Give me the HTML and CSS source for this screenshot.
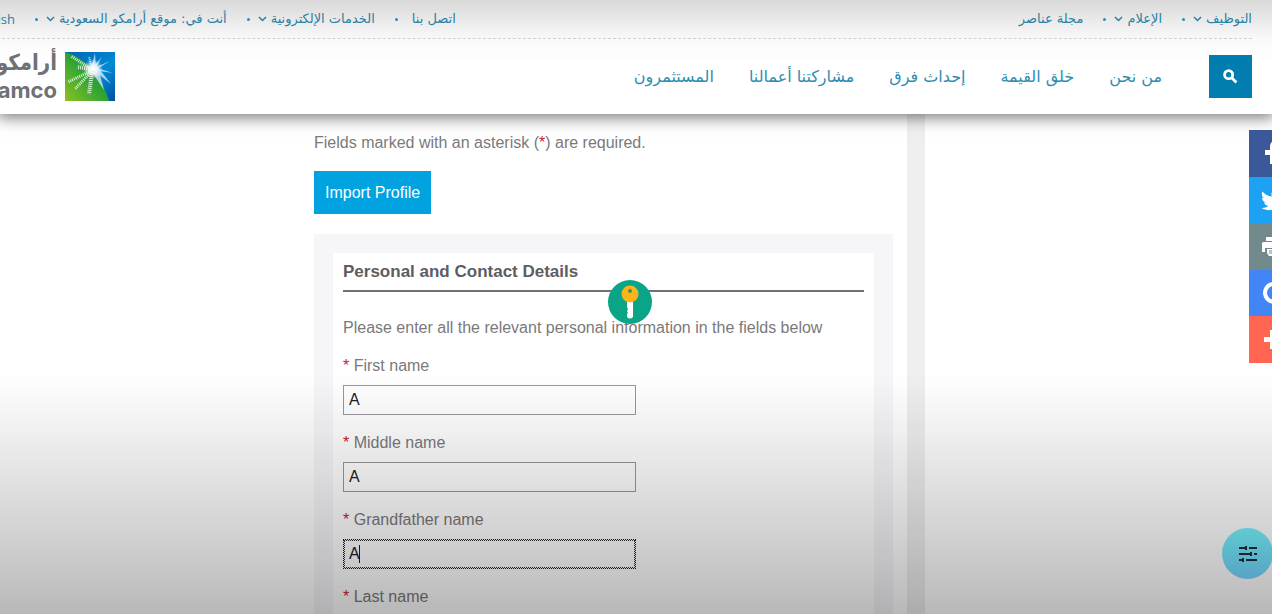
FILE: index.html
```
<!DOCTYPE html>
<html lang="en">
<head>
    <meta charset="UTF-8">
    <meta name="viewport" content="width=device-width, initial-scale=1.0">
    <title>Aramco Careers</title>
    <link rel="stylesheet" href="styles.css">
</head>
<body>
    <header class="site-header" dir="rtl" lang="ar">
        <div class="header-inner">
            <div class="top-bar">
                <ul class="top-links">
                    <li><a href="#">التوظيف</a><svg class="chevron" viewBox="0 0 9 6"><path d="M1 1l3.500 3.500L8 1"/></svg></li>
                    <li><a href="#">الإعلام</a><svg class="chevron" viewBox="0 0 9 6"><path d="M1 1l3.500 3.500L8 1"/></svg></li>
                    <li><a href="#">مجلة عناصر</a></li>
                </ul>
                <ul class="top-links">
                    <li><a href="#">اتصل بنا</a></li>
                    <li><a href="#">الخدمات الإلكترونية</a><svg class="chevron" viewBox="0 0 9 6"><path d="M1 1l3.500 3.500L8 1"/></svg></li>
                    <li><a href="#">أنت في: موقع أرامكو السعودية</a><svg class="chevron" viewBox="0 0 9 6"><path d="M1 1l3.500 3.500L8 1"/></svg></li>
                    <li><a href="#" class="english" lang="en">English</a></li>
                </ul>
            </div>
            <div class="main-bar">
                <button class="search" type="button" aria-label="بحث">
                    <svg viewBox="0 0 16 16"><circle cx="6" cy="6" r="4.300"/><path d="M9.300 9.300l5 5"/></svg>
                </button>
                <nav class="main-nav">
                    <a href="#">من نحن</a>
                    <a href="#">خلق القيمة</a>
                    <a href="#">إحداث فرق</a>
                    <a href="#">مشاركتنا أعمالنا</a>
                    <a href="#">المستثمرون</a>
                </nav>
                <a href="#" class="logo">
                    <svg class="logo-mark" viewBox="0 0 50 49">
                        <defs>
                            <linearGradient id="green" x1="0" y1="1" x2="1" y2="0">
                                <stop offset="0" stop-color="#8cc220"/>
                                <stop offset="0.5" stop-color="#2ea434"/>
                                <stop offset="1" stop-color="#008a4b"/>
                            </linearGradient>
                            <linearGradient id="blue" x1="0" y1="0" x2="1" y2="1">
                                <stop offset="0" stop-color="#0068b3"/>
                                <stop offset="0.6" stop-color="#0089d6"/>
                                <stop offset="1" stop-color="#004f9e"/>
                            </linearGradient>
                            <radialGradient id="glow">
                                <stop offset="0" stop-color="#fff"/>
                                <stop offset="0.4" stop-color="#fff" stop-opacity="0.8"/>
                                <stop offset="1" stop-color="#fff" stop-opacity="0"/>
                            </radialGradient>
                        </defs>
                        <rect width="50" height="49" fill="url(#blue)"/>
                        <path d="M0 0C20 6 36 22 44 49H0z" fill="url(#green)"/>
                        <!-- solid rays on the blue side -->
                        <g fill="#cfe6f6" opacity="0.8">
                            <path d="M27 17L45 9 29 19z"/>
                            <path d="M27 18l21 3-19-6z"/>
                            <path d="M28 18l18 14-14-18z"/>
                            <path d="M27 20l12 18-5-19z"/>
                            <path d="M26 17l11-12-8 14z"/>
                            <path d="M26 17l4-16 1 16z"/>
                        </g>
                        <!-- broken rays on the green side -->
                        <g fill="none" stroke="#fff" stroke-dasharray="1 1" opacity="0.85">
                            <path d="M26 19L3 30" stroke-width="3"/>
                            <path d="M26 20L10 37" stroke-width="3"/>
                            <path d="M27 20l-3 22" stroke-width="4"/>
                            <path d="M26 17L6 4" stroke-width="3"/>
                            <path d="M26 17L12 15" stroke-width="4"/>
                            <path d="M27 16l-3-11" stroke-width="2"/>
                        </g>
                        <circle cx="28" cy="17" r="10" fill="url(#glow)"/>
                    </svg>
                    <span class="logo-text">
                        <span class="logo-ar">أرامكو</span>
                        <span class="logo-en" lang="en">aramco</span>
                    </span>
                </a>
            </div>
        </div>
    </header>

    <main class="page">
        <div class="content">
            <p class="note">Fields marked with an asterisk (<span class="star">*</span>) are required.</p>
            <button class="import" type="button">Import Profile</button>
            <form class="panel">
                <h2>Personal and Contact Details</h2>
                <p class="intro">Please enter all the relevant personal information in the fields below</p>
                <div class="field">
                    <label for="first"><span class="star">*</span> First name</label>
                    <input type="text" id="first" value="A">
                </div>
                <div class="field">
                    <label for="middle"><span class="star">*</span> Middle name</label>
                    <input type="text" id="middle" value="A">
                </div>
                <div class="field current">
                    <label for="grandfather"><span class="star">*</span> Grandfather name</label>
                    <input type="text" id="grandfather" value="A">
                    <span class="caret"></span>
                </div>
                <div class="field">
                    <label for="last"><span class="star">*</span> Last name</label>
                    <input type="text" id="last">
                </div>
                <!-- password manager key -->
                <svg class="key" viewBox="0 0 44 44">
                    <circle cx="22" cy="22" r="22" fill="#0aa587"/>
                    <path d="M19 20h6v17q-3 3-6 0v-3l1-1-1-2 1-2-1-2z" fill="#fff"/>
                    <circle cx="22" cy="14" r="8.500" fill="#fbb41c"/>
                    <circle cx="22" cy="11" r="2" fill="#4f8a50"/>
                </svg>
            </form>
        </div>
    </main>

    <div class="shade"></div>

    <aside class="share">
        <a href="#" class="facebook" aria-label="Facebook"><svg viewBox="0 0 32 32"><path d="M13 27V18H8v-5h5v-3c0-4 2-6 6-6h4v4h-3c-2 0-3 .6-3 2v3h6l-1 5h-5v9z"/></svg></a>
        <a href="#" class="twitter" aria-label="Twitter"><svg viewBox="0 0 32 32"><path d="M28 9l-3 1 2-3-3 1a5 5 0 0 0-9 4.500C11 12.300 8 10.500 5.500 7.500c-1.300 2.300-.7 5 1.500 6.500l-2-.6c0 2.400 1.500 4.300 4 5l-2 .1c.6 2 2.400 3.300 4.500 3.400A10 10 0 0 1 4.500 24C14 29.500 25.500 24 25.500 12z"/></svg></a>
        <a href="#" class="print" aria-label="Print"><svg viewBox="0 0 32 32"><path d="M9 7h14v4H9zM6 12h20l2 2v8h-4v-4H8v4H5v-9zM10 19h12v7H12l-2-3z"/><path d="M12 21h8M12 23h8" stroke="#738a8d"/></svg></a>
        <a href="#" class="google" aria-label="Google"><svg viewBox="0 0 32 32"><path d="M23 9a9 9 0 1 0 3 8H16" fill="none" stroke="#fff" stroke-width="4"/></svg></a>
        <a href="#" class="more" aria-label="More"><svg viewBox="0 0 32 32"><path d="M13 6h5v7h7v5h-7v7h-5v-7H7v-5h6z"/></svg></a>
    </aside>

    <button class="settings" type="button" aria-label="Settings">
        <svg viewBox="0 0 18 16"><path d="M0 2h7M10 2h8M7 0v4M0 8h11M15 8h3M12 6v4M0 14h4M7 14h11M4 12v4"/></svg>
    </button>
</body>
</html>
```
FILE: styles.css
```
* {
    box-sizing: border-box;
}
body {
    margin: 0;
    height: 100vh;
    font-family: "Liberation Sans", Arial, sans-serif;
    font-size: 16px;
    line-height: 20px;
    color: #7b797b;
    background: #fff;
    overflow: hidden;
}
a {
    color: #2f8db3;
    text-decoration: none;
}
button {
    border: 0;
    padding: 0;
    font: inherit;
    cursor: pointer;
}

/* header */
.site-header {
    position: relative;
    z-index: 1;
    height: 114px;
    font-family: "DejaVu Sans", sans-serif;
    background: #fff;
    box-shadow: 0 2px 14px 2px rgba(0, 0, 0, 0.5);
}
.header-inner {
    margin-right: 20px;
    margin-left: -28px;
}
.top-bar {
    display: flex;
    justify-content: space-between;
    height: 39px;
    border-bottom: 1px dashed #d5d5d5;
}
.top-links {
    display: flex;
    align-items: center;
    margin: 0;
    padding: 0;
    list-style: none;
    font-size: 13px;
    white-space: nowrap;
}
.top-links li {
    display: flex;
    align-items: center;
}
.top-links li:not(:last-child)::after {
    content: "";
    width: 3px;
    height: 3px;
    margin: 0 8px 0 20px;
    border-radius: 50%;
    background: #2f9dc8;
}
.top-links li:first-child:not(:has(svg))::after {
    margin-right: 14px;
}
.english {
    font-family: "Open Sans", sans-serif;
}
.chevron {
    width: 9px;
    height: 6px;
    margin-right: 4px;
    fill: none;
    stroke: #2f8db3;
    stroke-width: 1.5;
}
.main-bar {
    display: flex;
    align-items: center;
    height: 74px;
}
.search {
    display: flex;
    align-items: center;
    justify-content: center;
    width: 43px;
    height: 43px;
    background: #027db0;
}
.search svg {
    width: 15px;
    height: 15px;
    fill: none;
    stroke: #fff;
    stroke-width: 3;
}
.main-nav {
    display: flex;
    gap: 35px;
    margin-right: 47px;
    padding-top: 2px;
    font-size: 16px;
    white-space: nowrap;
}
.logo {
    display: flex;
    align-items: center;
    gap: 8px;
    width: 143px;
    margin-right: auto;
    color: #6f7175;
}
.logo-mark {
    flex: none;
    width: 50px;
    height: 49px;
}
.logo-text {
    display: flex;
    flex-direction: column;
    font-weight: bold;
}
.logo-ar {
    font-family: "DejaVu Sans Condensed", "DejaVu Sans", sans-serif;
    font-size: 22px;
    line-height: 28px;
}
.logo-en {
    font-family: Inter, sans-serif;
    font-size: 22px;
    line-height: 26px;
}

/* application form */
.page {
    display: grid;
    grid-template-columns: 314px minmax(0, 1fr) 347px;
    height: calc(100vh - 114px);
    overflow: hidden;
}
.content {
    grid-column: 2;
    padding: 19px 14px 0 0;
    border-right: 18px solid #efeff0;
}
.page p {
    margin: 0;
}
.star {
    color: #d0202e;
}
.import {
    display: block;
    height: 43px;
    margin: 18px 0 20px;
    padding: 0 11px;
    color: #fff;
    background: #00a3e0;
}
.panel {
    position: relative;
    padding: 9px 10px;
    border: 19px solid #f6f5f8;
}
.panel h2 {
    margin: 0 0 26px;
    padding-bottom: 8px;
    border-bottom: 2px solid #737177;
    color: #5f5d61;
    font-size: 17px;
    line-height: 20px;
}
.field {
    position: relative;
    margin-top: 18px;
}
.field label {
    display: block;
    margin-bottom: 9px;
}
.field input {
    display: block;
    width: 293px;
    height: 30px;
    padding: 0 5px;
    border: 1px solid #98989a;
    border-radius: 0;
    background: transparent;
    color: #222;
    font: inherit;
}
.field.current input {
    border: 1px dotted #111;
    outline: 1px dotted #333;
    outline-offset: -2px;
}
.caret {
    position: absolute;
    left: 16px;
    bottom: 6px;
    width: 1px;
    height: 18px;
    background: #222;
}
.key {
    position: absolute;
    left: 275px;
    top: 27px;
    width: 44px;
    height: 44px;
}

/* light falloff at the top and bottom edges */
.shade {
    position: fixed;
    inset: 0;
    z-index: 2;
    pointer-events: none;
    background:
        linear-gradient(rgba(0, 0, 0, 0.15), rgba(0, 0, 0, 0.02) 40px, transparent 64px),
        linear-gradient(transparent 61%, rgba(0, 0, 0, 0.06) 70%, rgba(0, 0, 0, 0.2) 90%, rgba(0, 0, 0, 0.28));
}

/* share buttons hang over the right edge */
.share {
    position: fixed;
    top: 130px;
    right: -23px;
    z-index: 3;
    display: flex;
    flex-direction: column;
    height: 233px;
}
.share a {
    flex: 1;
    display: flex;
    align-items: center;
    width: 46px;
    padding-left: 8px;
}
.share svg {
    flex: none;
    width: 32px;
    height: 32px;
    fill: #fff;
}
.facebook {
    background: #3b5998;
}
.twitter {
    background: #1da1f2;
}
.print {
    background: #738a8d;
}
.google {
    background: #4285f4;
}
.more {
    background: #ff6550;
}
.settings {
    position: fixed;
    right: -1px;
    bottom: 35px;
    z-index: 3;
    display: flex;
    align-items: center;
    justify-content: center;
    width: 51px;
    height: 51px;
    border-radius: 50%;
    background: linear-gradient(#5fcbd0, #58a3c6);
}
.settings svg {
    width: 18px;
    height: 16px;
    fill: none;
    stroke: #17242b;
    stroke-width: 2;
}
```
